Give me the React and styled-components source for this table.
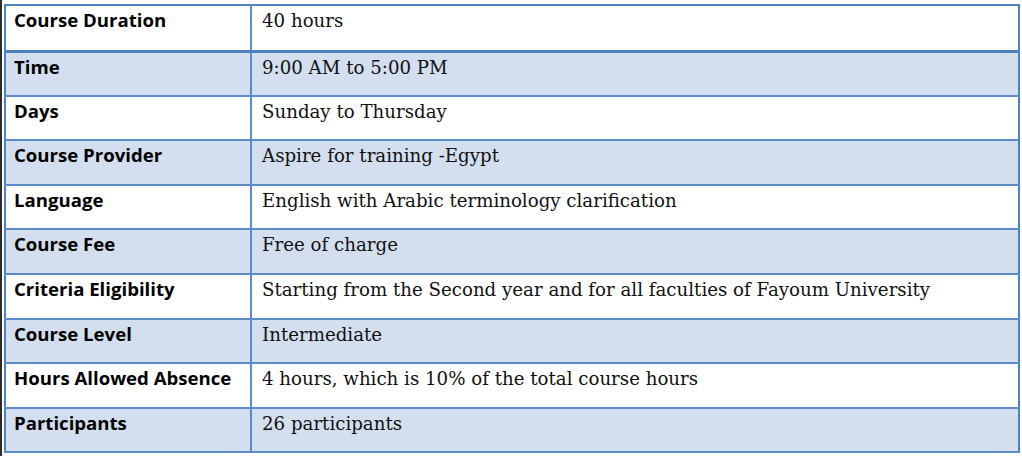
import React from 'react'
import styled, { createGlobalStyle } from 'styled-components'

const GlobalStyle = createGlobalStyle`
  html, body {
    margin: 0;
    padding: 0;
    background: #ffffff;
  }
`

const rows = [
  ['Course Duration', '40 hours'],
  ['Time', '9:00 AM to 5:00 PM'],
  ['Days', 'Sunday to Thursday'],
  ['Course Provider', 'Aspire for training -Egypt'],
  ['Language', 'English with Arabic terminology clarification'],
  ['Course Fee', 'Free of charge'],
  ['Criteria Eligibility', 'Starting from the Second year and for all faculties of Fayoum University'],
  ['Course Level', 'Intermediate'],
  ['Hours Allowed Absence', '4 hours, which is 10% of the total course hours'],
  ['Participants', '26 participants'],
]

const App = () => {
  return (
    <>
      <GlobalStyle />
      <Page>
        <Edge />
        <Table>
          <colgroup>
            <col style={{ width: '246px' }} />
            <col />
          </colgroup>
          <tbody>
            {rows.map(([label, value], i) => (
              <Row key={label} $shaded={i % 2 === 1} $header={i === 0}>
                <Label>{label}</Label>
                <Value>{value}</Value>
              </Row>
            ))}
          </tbody>
        </Table>
      </Page>
    </>
  )
}

export default App

const Page = styled.div`
  display: flex;
  align-items: flex-start;
  width: 1022px;
  height: 456px;
  overflow: hidden;
`

const Edge = styled.div`
  width: 2px;
  height: 456px;
  background: #2b2b2b;
  flex-shrink: 0;
`

const Table = styled.table`
  margin: 4px 0 0 2px;
  width: 1016px;
  border-collapse: collapse;
  border: 2px solid #4f81bd;
  table-layout: fixed;
`

const Row = styled.tr`
  height: ${p => (p.$header ? '46px' : '44.6px')};
  background: ${p => (p.$shaded ? '#d3dfee' : '#ffffff')};
  border-bottom: ${p => (p.$header ? '3px solid #4f81bd' : '2px solid #5b8cc8')};
`

const Label = styled.td`
  padding: 0 4px 0 8px;
  vertical-align: top;
  border-right: 2px solid #5b8cc8;
  font-family: "Open Sans", Lato, sans-serif;
  font-weight: 700;
  font-size: 18.6px;
  line-height: 27px;
  color: #000000;
  white-space: nowrap;
  overflow: hidden;
`

const Value = styled.td`
  padding: 2px 8px 0 10px;
  vertical-align: top;
  font-family: "DejaVu Serif", "Liberation Serif", serif;
  font-size: 18.2px;
  line-height: 26px;
  color: #111111;
  white-space: nowrap;
`
